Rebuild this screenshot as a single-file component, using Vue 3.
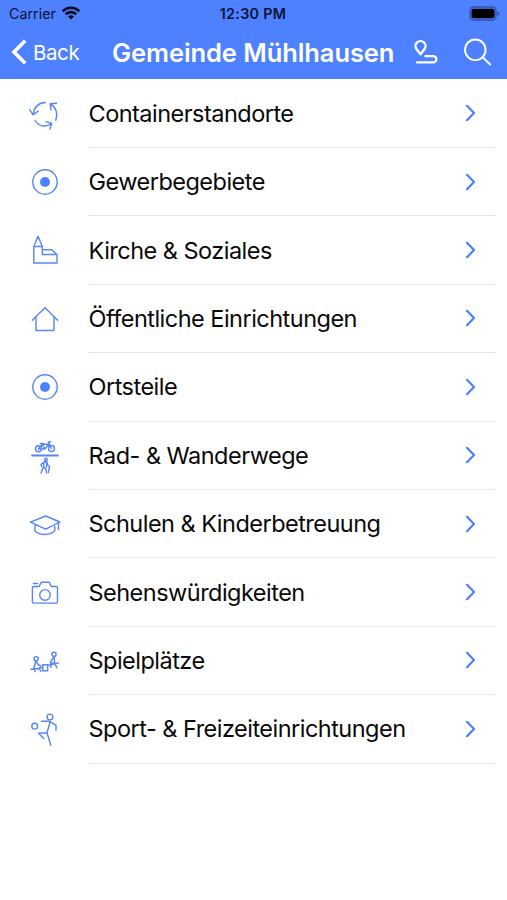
<script setup>
import { ref } from 'vue'

const title = ref('Gemeinde Mühlhausen')

const categories = ref([
  { name: 'Containerstandorte', icon: 'recycle' },
  { name: 'Gewerbegebiete', icon: 'dot' },
  { name: 'Kirche & Soziales', icon: 'church' },
  { name: 'Öffentliche Einrichtungen', icon: 'house' },
  { name: 'Ortsteile', icon: 'dot' },
  { name: 'Rad- & Wanderwege', icon: 'trails' },
  { name: 'Schulen & Kinderbetreuung', icon: 'school' },
  { name: 'Sehenswürdigkeiten', icon: 'camera' },
  { name: 'Spielplätze', icon: 'playground' },
  { name: 'Sport- & Freizeiteinrichtungen', icon: 'sport' }
])
</script>

<template>
  <main class="app">
    <header class="header">
      <div class="status">
        <div class="carrier">
          <span>Carrier</span>
          <svg class="wifi" width="20" height="14" viewBox="0 0 20 14">
            <path d="M1.6 5.2a12 12 0 0 1 16.8 0" />
            <path d="M4.7 8.3a7.6 7.6 0 0 1 10.6 0" />
            <path class="solid" d="M10 13.6l-3-3a4.3 4.3 0 0 1 6 0z" />
          </svg>
        </div>
        <span class="time">12:30 PM</span>
        <svg class="battery" width="31" height="15" viewBox="0 0 31 15">
          <rect class="shell" x="1" y="1" width="26" height="13" rx="3.6" />
          <rect x="2.500" y="2.800" width="23" height="9.400" rx="1.8" />
          <path class="cap" d="M28.3 5.3q2 .6 2 2.2t-2 2.2z" />
        </svg>
      </div>
      <nav class="navbar">
        <a class="back">
          <svg width="17" height="28" viewBox="0 0 17 28">
            <path d="M14.2 2.7L3 14l11.2 11.3" />
          </svg>
          <span>Back</span>
        </a>
        <h1>{{ title }}</h1>
        <div class="actions">
          <svg class="route" width="26" height="28" viewBox="0 0 26 28">
            <path d="M7.500 16.300L3.600 11.200a5 5 0 1 1 7.800 0z" />
            <path d="M12.500 18.200h7.800a3.100 3.100 0 0 1 0 6.200H4" />
          </svg>
          <svg class="search" width="30" height="30" viewBox="0 0 30 30">
            <circle cx="12.3" cy="12.8" r="10.3" />
            <path d="M19.8 20.300l7.300 7.200" />
          </svg>
        </div>
      </nav>
    </header>

    <ul class="list">
      <li v-for="category in categories" :key="category.name" class="row">
        <svg class="icon" width="50" height="50" viewBox="0 0 50 50">
          <g v-if="category.icon === 'recycle'">
            <path d="M25.5 13.5c-6.5 0-11.500 4.500-12.300 11.500M9.700 20.500l3.300 5.300 5.200-3.600" />
            <path d="M30.500 15.200c5.500 2.700 7.800 9.500 5.300 16M36.500 14.300l-6.300.4.800 6.300" />
            <path d="M15 31.500c3.500 6 10.500 7.200 16.300 3.200M26 32.700l5.800 1.600-2 5.700" />
          </g>
          <g v-else-if="category.icon === 'dot'">
            <circle cx="25" cy="25" r="12.200" />
            <circle class="fill" cx="25" cy="25" r="5" />
          </g>
          <g v-else-if="category.icon === 'church'">
            <path d="M13.800 20.500L18 10.300l4.300 10.200v8H37V37H13.800zM13.800 20.500h8.500M22.300 23.700h9.500l5.200 5" />
          </g>
          <g v-else-if="category.icon === 'house'">
            <path d="M12.300 26.300L25 13.700l12.700 12.600M16 23v13.500h18V23" />
          </g>
          <g v-else-if="category.icon === 'trails'">
            <circle cx="18.500" cy="17.800" r="3" />
            <circle cx="31.500" cy="17.500" r="3" />
            <path d="M18.500 17.800l3.700-4.500h6.600l-4 4.700h-6.300M22.200 13.300l2.600 4.700M20.500 12.500h3M31.500 17.500l-3.200-6.600h2.500" />
            <path class="path" d="M12 24.500h26" />
            <circle cx="26" cy="28.500" r="1.300" />
            <path d="M24 31l-3 2.500.7 2M24 31l2.800-.3.800 3.300 2 1.500M24 31l-.5 5-2.500 6M23.500 36l2.500 2.500.5 3.500M26.800 31l-.5 5.500M29.600 35.500l-1.300 6" />
          </g>
          <g v-else-if="category.icon === 'school'">
            <path d="M10.300 23.200L25.800 17l14 6-14 7.200zM15.300 25.700c-.4 2.500-.7 4.500-.5 6 3.500 5 16.200 5 20 0 .2-1.500 0-3.500-.4-6M38.500 24v6.500" />
          </g>
          <g v-else-if="category.icon === 'camera'">
            <path d="M13.700 18.500h5.500l2-4.300h8l2 4.300h5a1.300 1.300 0 0 1 1.300 1.300v14a1.300 1.300 0 0 1-1.300 1.300H13.700a1.300 1.300 0 0 1-1.300-1.300v-14a1.300 1.300 0 0 1 1.300-1.300zM13.500 15.500h4" />
            <circle cx="25" cy="26.900" r="5.300" />
          </g>
          <g v-else-if="category.icon === 'playground'">
            <circle cx="16.200" cy="22.700" r="2.100" />
            <circle cx="34" cy="18.300" r="2.100" />
            <path d="M15.700 25.300l-2 7.500h5.500l1.800 2.600M15.700 25.300l3 3.700 2.300 1M11 33.300h3.500l.5 2.300M19 32l4-.6M22.700 28.800h5v5.900h-5zM27.700 29.500l11-2.600M34.200 20.800l.5 6.700-4.200-.7.500 4.500M34.200 20.800l-3.500 4.700M34.700 27.500l2.300 4.300" />
          </g>
          <g v-else>
            <circle cx="14.700" cy="22.200" r="2.900" />
            <circle cx="30" cy="13" r="2.900" />
            <path d="M21.500 17.300h8.300l6.200 4v5M30.300 17.300L27 28.800l3.800 12.400M27 28.800l-8.500.5 5.200 5.200" />
          </g>
        </svg>
        <div class="content">
          <span class="name">{{ category.name }}</span>
          <svg class="chevron" width="12" height="18" viewBox="0 0 12 18">
            <path d="M2 1.800L9 9l-7 7.200" />
          </svg>
        </div>
      </li>
    </ul>
  </main>
</template>

<style>
body {
  margin: 0;
  background: #fff;
}
</style>

<style scoped>
* {
  box-sizing: border-box;
}
.app {
  height: 900px;
  overflow: hidden;
  background: #fff;
  color: #090909;
  font-family: Inter, "Liberation Sans", sans-serif;
}
svg {
  display: block;
  flex: none;
  fill: none;
  stroke-linecap: round;
  stroke-linejoin: round;
}
.header {
  height: 79px;
  background: #4d81ff;
}
.status {
  display: grid;
  grid-template-columns: 1fr auto 1fr;
  align-items: center;
  height: 27px;
  padding: 0 9px;
  color: #0b1433;
  font-size: 14.3px;
}
.carrier {
  display: flex;
  align-items: center;
  gap: 5px;
}
.wifi {
  margin-top: -2px;
  stroke: #050b1d;
  stroke-width: 2.6;
  stroke-linecap: butt;
}
.wifi .solid {
  fill: #050b1d;
  stroke: none;
}
.time {
  margin-right: 1px;
  font-weight: 600;
  letter-spacing: 0.3px;
}
.battery {
  justify-self: end;
  margin-top: -1px;
  margin-right: -2px;
  fill: #000;
}
.battery .shell {
  fill: none;
  stroke: #2f52a8;
  stroke-width: 1.3;
}
.battery .cap {
  fill: #2f52a8;
}
.navbar {
  display: flex;
  align-items: center;
  height: 50px;
  padding: 0 14px 0 11px;
  color: #fff;
}
.back {
  display: flex;
  align-items: center;
  gap: 5px;
  width: 101px;
  font-size: 20.5px;
  letter-spacing: -0.4px;
}
.back svg {
  stroke: #fff;
  stroke-width: 3.6;
  stroke-linecap: butt;
  stroke-linejoin: miter;
}
h1 {
  margin: 0;
  font-size: 25.5px;
  font-weight: 600;
  letter-spacing: -0.08px;
  white-space: nowrap;
}
.actions {
  display: flex;
  align-items: center;
  gap: 24px;
  margin-left: auto;
  stroke: #fff;
}
.route {
  stroke-width: 2.3;
}
.search {
  stroke-width: 1.9;
}
.list {
  margin: 0;
  padding: 0.6px 0 0;
  list-style: none;
}
.row {
  display: flex;
  align-items: center;
  height: 68.4px;
  padding: 0 12px 0 20px;
}
.icon {
  margin-right: 18.5px;
  stroke: #5586f5;
  stroke-width: 1.4;
}
.icon .fill {
  fill: #4d81ff;
  stroke: none;
}
.icon .path {
  stroke-width: 1.8;
}
.content {
  display: flex;
  flex: 1;
  align-items: center;
  justify-content: space-between;
  height: 100%;
  padding-right: 18.5px;
  border-bottom: 1px solid #e7e7e8;
}
.name {
  font-size: 23.5px;
  letter-spacing: -0.52px;
  white-space: nowrap;
}
.chevron {
  stroke: #4d81ff;
  stroke-width: 2.2;
}
</style>
